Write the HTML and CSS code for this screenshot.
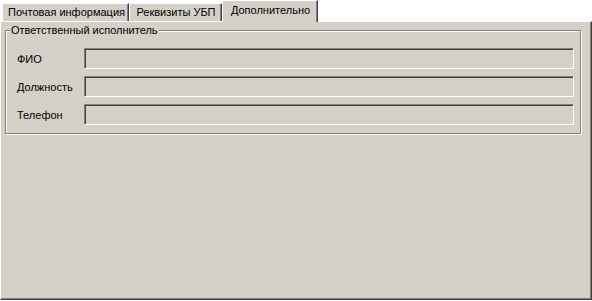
FILE: index.html
```html
<!DOCTYPE html>
<html lang="ru">
<head>
    <meta charset="UTF-8">
    <title>Дополнительно</title>
    <link rel="stylesheet" href="styles.css">
</head>
<body>
    <div class="tabs">
        <div class="tab tab-post">Почтовая информация</div>
        <div class="tab tab-req">Реквизиты УБП</div>
        <div class="tab active">Дополнительно</div>
    </div>
    <div class="panel">
        <div class="group">
            <span class="legend">Ответственный исполнитель</span>
            <div class="row">
                <label>ФИО</label>
                <input class="field" type="text" disabled>
            </div>
            <div class="row">
                <label>Должность</label>
                <input class="field" type="text" disabled>
            </div>
            <div class="row">
                <label>Телефон</label>
                <input class="field" type="text" disabled>
            </div>
        </div>
    </div>
</body>
</html>
```

FILE: styles.css
```css
*{
    margin: 0px;
    padding: 0px;
    box-sizing: border-box;
}

body{
    background-color: #fff;
    font-family: "Liberation Sans", Arial, sans-serif;
    font-size: 11px;
    color: #000;
    width: 592px;
}

.tabs{
    display: flex;
    align-items: flex-end;
    height: 21px;
    padding-left: 2px;
}

.tab{
    height: 18px;
    line-height: 16px;
    padding: 0 4px 0 5px;
    background-color: #d4d0c8;
    border-top: 1px solid #fff;
    border-left: 1px solid #fff;
    border-right: 1px solid #404040;
    box-shadow: inset -1px 0 #808080;
    white-space: nowrap;
    text-align: center;
}

.tab-post{
    width: 127px;
}

.tab-req{
    width: 93px;
}

.tab.active{
    width: 96px;
    height: 22px;
    line-height: 19px;
    margin-bottom: -1px;
    position: relative;
    z-index: 1;
}

.panel{
    height: 279px;
    background-color: #d4d0c8;
    border: 1px solid;
    border-color: #fff #404040 #404040 #fff;
    box-shadow: inset -1px -1px #808080;
    padding: 8px 0 0 4px;
}

.group{
    position: relative;
    width: 576px;
    border: 1px solid #808080;
    box-shadow: inset 1px 1px #fff, 1px 1px #fff;
    padding: 17px 5px 8px 11px;
    display: flex;
    flex-direction: column;
    gap: 7px;
}

.legend{
    position: absolute;
    top: -7px;
    left: 4px;
    padding: 0 1px;
    line-height: 13px;
    background-color: #d4d0c8;
}

.row{
    display: flex;
    align-items: center;
    height: 21px;
}

.row label{
    width: 67px;
}

.field{
    width: 490px;
    height: 21px;
    background-color: #d4d0c8;
    border: 1px solid;
    border-color: #808080 #fff #fff #808080;
    box-shadow: inset 1px 1px #404040;
    outline: none;
}
```
